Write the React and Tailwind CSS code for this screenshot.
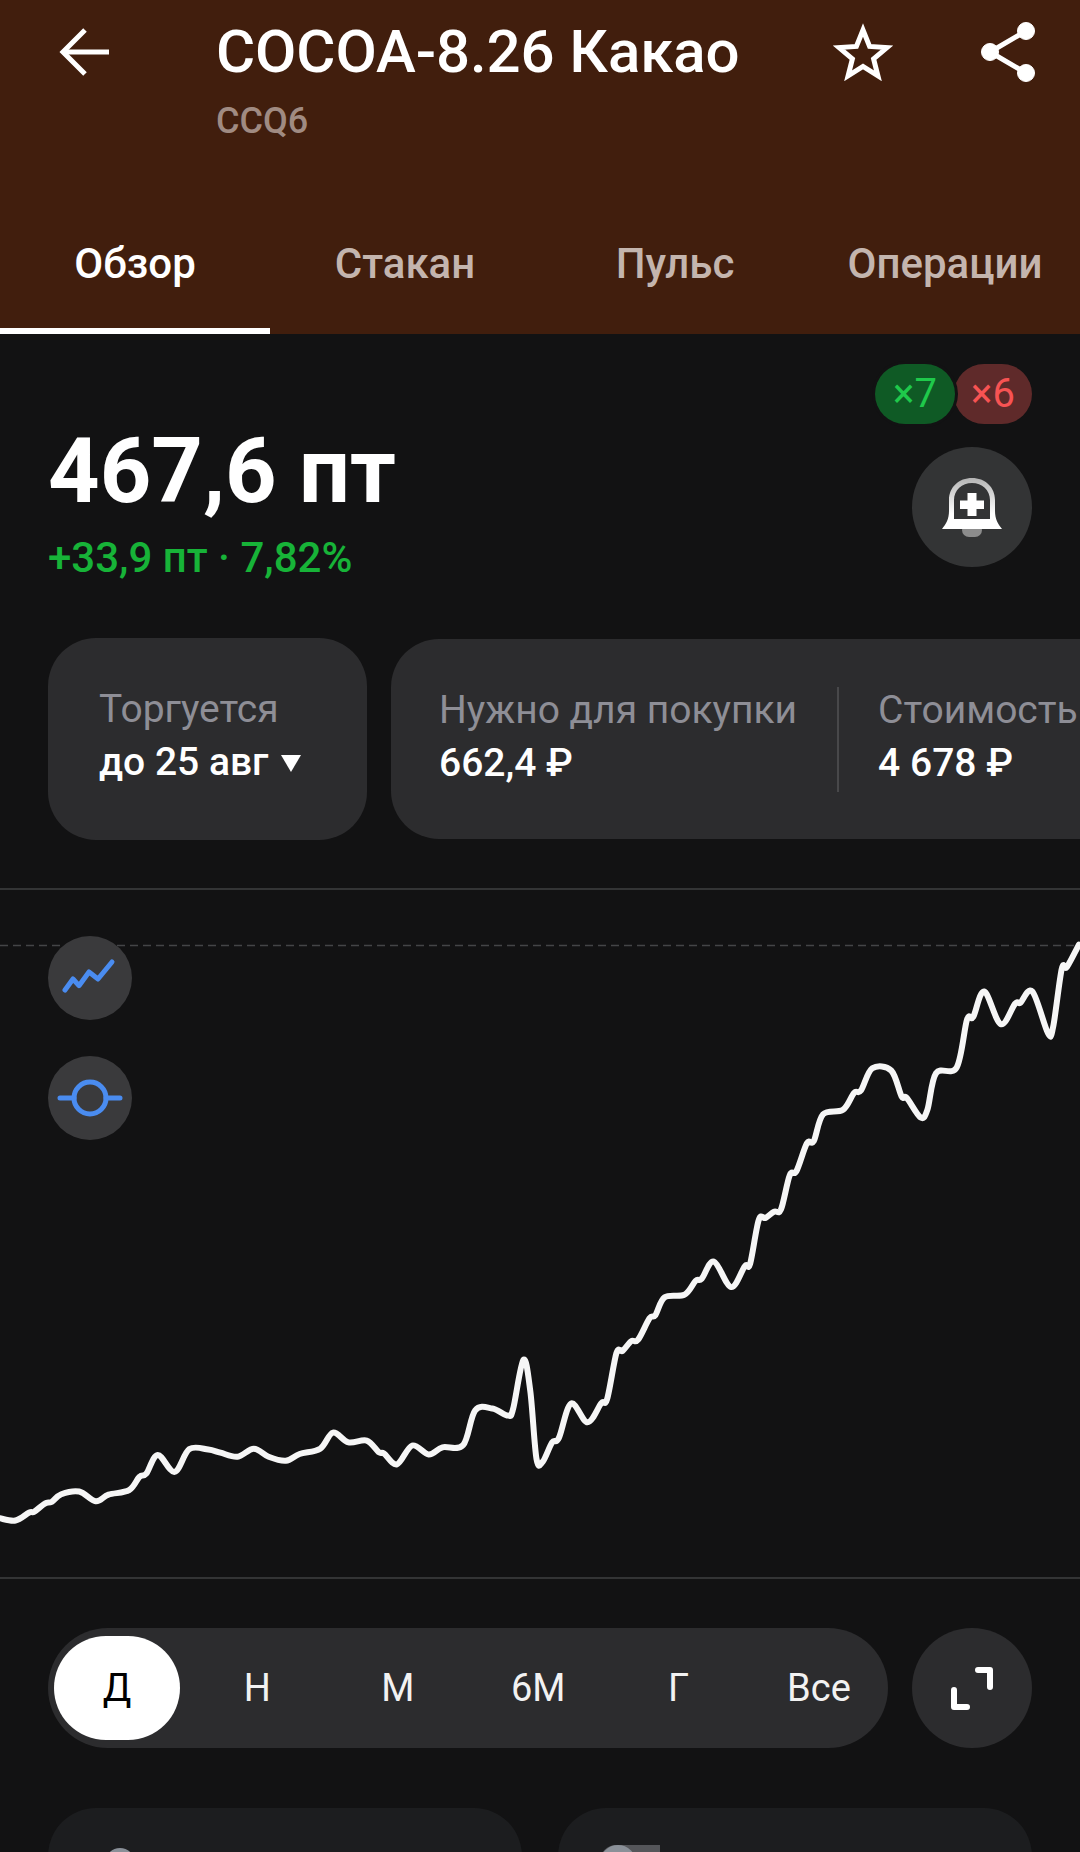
const FONT = { fontFamily: "Roboto, sans-serif" };

// points read off the reference chart, in page px
const LEFT = [[0,1385],[45,1390],[85,1372],[100,1370],[130,1352],[150,1348],[178,1331],[230,1325],[278,1347],[315,1332],[375,1322],[405,1292],[425,1285],[458,1243],[507,1281],[550,1230],[605,1231],[640,1238],[690,1247],[737,1229],[780,1247],[830,1256],[870,1241],[930,1229],[967,1193],[1012,1215],[1065,1211],[1100,1237],[1115,1240],[1153,1264],[1197,1222],[1245,1242],[1285,1226],[1345,1221],[1380,1143],[1430,1139],[1475,1155],[1490,1140],[1520,1030],[1540,1100],[1558,1252]];
const RIGHT = [[8,1258],[35,1215],[55,1205],[90,1128],[138,1170],[178,1127],[195,1118],[222,1015],[240,1010],[265,988],[285,985],[318,937],[335,930],[362,890],[420,884],[452,853],[470,848],[505,810],[555,867],[595,820],[610,815],[635,717],[655,712],[680,698],[700,693],[725,617],[745,607],[775,545],[795,540],[822,480],[880,470],[912,432],[932,427],[965,377],[1020,382],[1050,440],[1065,443],[1105,487],[1125,470],[1150,388],[1210,375],[1240,268],[1258,262],[1290,205],[1338,278],[1380,232],[1395,230],[1430,205],[1475,298],[1490,285],[1515,155],[1530,150],[1565,100]];

const CHART_TOP = 890;

const points = [
  ...LEFT.map(([x, y]) => [x / 2.904, 900 + y / 2.24 - CHART_TOP]),
  ...RIGHT.map(([x, y]) => [540 + x / 2.904, 900 + y / 2.24 - CHART_TOP]),
];

function smoothPath(pts) {
  let d = `M${pts[0][0].toFixed(1)} ${pts[0][1].toFixed(1)}`;
  for (let i = 0; i < pts.length - 1; i++) {
    const p0 = pts[Math.max(i - 1, 0)];
    const p1 = pts[i];
    const p2 = pts[i + 1];
    const p3 = pts[Math.min(i + 2, pts.length - 1)];
    const c1x = p1[0] + (p2[0] - p0[0]) / 6;
    const c1y = p1[1] + (p2[1] - p0[1]) / 6;
    const c2x = p2[0] - (p3[0] - p1[0]) / 6;
    const c2y = p2[1] - (p3[1] - p1[1]) / 6;
    d += `C${c1x.toFixed(1)} ${c1y.toFixed(1)} ${c2x.toFixed(1)} ${c2y.toFixed(1)} ${p2[0].toFixed(1)} ${p2[1].toFixed(1)}`;
  }
  return d;
}

const Back = () => (
  <svg width="52" height="50" viewBox="0 0 52 50" fill="none" stroke="white" strokeWidth="5">
    <path d="M50 25H5" />
    <path d="M26 3L4 25l22 22" />
  </svg>
);

const Star = () => (
  <svg width="60" height="58" viewBox="0 0 60 58" fill="none" stroke="white" strokeWidth="5" strokeLinejoin="miter">
    <path d="M30 7l6.6 16.4 17.4 1.2-13.4 11.2 4.3 17-14.9-9.4-14.9 9.4 4.3-17L6 24.600l17.400-1.200z" />
  </svg>
);

const Share = () => (
  <svg width="56" height="62" viewBox="0 0 56 62" fill="white" stroke="white">
    <path d="M46 10L10 31l36 21" fill="none" strokeWidth="5" />
    <circle cx="46" cy="10" r="8.500" />
    <circle cx="10" cy="31" r="8.500" />
    <circle cx="46" cy="52" r="8.500" />
  </svg>
);

const Bell = () => (
  <svg width="60" height="60" viewBox="0 0 60 60">
    <defs>
      <linearGradient id="bellFade" x1="0" y1="0" x2="0" y2="1">
        <stop offset="0" stopColor="#b4b4b4" />
        <stop offset="0.7" stopColor="#ffffff" />
      </linearGradient>
    </defs>
    <rect x="20" y="46" width="20" height="14" rx="7" fill="#8c8c8c" />
    <path
      fillRule="evenodd"
      fill="url(#bellFade)"
      d="M0 52C4 47 7 42 7 34V23C7 10 17 1 30 1s23 9 23 22v11c0 8 3 13 7 18zM12 42h36V23C48 13 40 6 30 6S12 13 12 23z"
    />
    <path fill="white" d="M25.500 16h9v7.500H42v8.500h-7.500v7h-9v-7H18v-8.500h7.500z" />
  </svg>
);

const Expand = () => (
  <svg width="48" height="48" viewBox="0 0 48 48" fill="none" stroke="white" strokeWidth="6" strokeLinecap="round" strokeLinejoin="round">
    <path d="M30 6h12v17" />
    <path d="M6 26v17h13" />
  </svg>
);

const PERIODS = ["Д", "Н", "М", "6М", "Г", "Все"];
const TABS = ["Обзор", "Стакан", "Пульс", "Операции"];

export default function App() {
  return (
    <div className="w-[1080px] h-[1852px] overflow-hidden bg-[#121213] text-white" style={FONT}>
      {/* HEADER */}
      <div className="h-[334px] bg-[#411e0d] flex flex-col">
        <div className="h-[189px] flex items-start">
          <div className="ml-[59px] mt-[27px] shrink-0"><Back /></div>
          <div className="ml-[105px] w-[600px]">
            <div className="text-[60px] leading-[64px] font-medium mt-[20px] whitespace-nowrap tracking-[-0.1px]">COCOA-8.26 Какао</div>
            <div className="text-[36px] leading-[42px] font-medium text-[#a08b82] mt-[16px]">CCQ6</div>
          </div>
          <div className="mt-[23px] shrink-0 ml-[17px]"><Star /></div>
          <div className="mt-[21px] ml-[87px] shrink-0"><Share /></div>
        </div>
        <div className="grid grid-cols-4 flex-1">
          {TABS.map((t, i) => (
            <div
              key={t}
              className={`flex items-start justify-center pt-[50px] text-[42px] leading-[50px] font-medium border-b-[6px] ${
                i === 0 ? "text-white border-white" : "text-[#c4b5ae] border-transparent"
              }`}
            >
              {t}
            </div>
          ))}
        </div>
      </div>

      {/* PRICE */}
      <div className="h-[304px] flex justify-between pl-[48px] pr-[48px]">
        <div className="pt-[90px]">
          <div className="text-[90px] leading-[96px] font-bold">467,6 пт</div>
          <div className="text-[42px] leading-[46px] font-medium text-[#17b338] mt-[15px]">+33,9 пт · 7,82%</div>
        </div>
        <div className="flex flex-col items-end pt-[30px]">
          <div className="flex text-[40px] leading-[60px]">
            <div className="relative z-10 h-[60px] w-[80px] rounded-full bg-[#0f5a25] text-[#1fc94b] text-center ring-[3px] ring-[#121213]">×7</div>
            <div className="h-[60px] w-[78px] -ml-[1px] rounded-full bg-[#5f2a2a] text-[#f75353] text-center">×6</div>
          </div>
          <div className="mt-[23px] w-[120px] h-[120px] rounded-full bg-[#333435] flex items-center justify-center">
            <Bell />
          </div>
        </div>
      </div>

      {/* INFO CARDS */}
      <div className="h-[252px] flex gap-[24px] pl-[48px] border-b-2 border-[#333435]">
        <div className="w-[319px] h-[202px] shrink-0 rounded-[48px] bg-[#2c2c2e] pl-[51px] pt-[48px]">
          <div className="text-[39px] leading-[46px] text-[#8e8e96]">Торгуется</div>
          <div className="flex items-center text-[39px] leading-[44px] font-medium mt-[8px]">
            до 25 авг
            <svg className="ml-[12px] mt-[3px]" width="22" height="19" viewBox="0 0 22 19" fill="white"><path d="M1 1h20L11 18z" /></svg>
          </div>
        </div>
        <div className="w-[800px] h-[200px] mt-[1px] shrink-0 rounded-[48px] bg-[#2c2c2e] pl-[48px] pb-[6px] flex items-center">
          <div className="pr-[40px]">
            <div className="text-[39px] leading-[46px] text-[#8e8e96]">Нужно для покупки</div>
            <div className="text-[39px] leading-[44px] font-medium mt-[8px]">662,4 ₽</div>
          </div>
          <div className="w-[2px] h-[105px] mt-[6px] bg-[#48484a]" />
          <div className="pl-[39px]">
            <div className="text-[39px] leading-[46px] text-[#8e8e96]">Стоимость</div>
            <div className="text-[39px] leading-[44px] font-medium mt-[8px]">4 678 ₽</div>
          </div>
        </div>
      </div>

      {/* CHART */}
      <div className="relative h-[689px] border-b-2 border-[#333435] pl-[48px] pt-[46px]">
        <svg className="absolute left-0 top-0" width="1080" height="689" fill="none">
          <line x1="0" y1="55.500" x2="1080" y2="55.500" stroke="#444547" strokeWidth="1.500" strokeDasharray="8 5" />
          <path d={smoothPath(points)} stroke="#f6f6f6" strokeWidth="6" strokeLinecap="round" strokeLinejoin="round" />
        </svg>
        <div className="relative flex flex-col gap-[36px]">
          <div className="w-[84px] h-[84px] rounded-full bg-[#3a3a3c]">
            <svg width="84" height="84" fill="none" stroke="#4a8cf0" strokeWidth="5" strokeLinecap="round" strokeLinejoin="round">
              <path d="M17 54l8-11 6 6.700L41 36l9 7 14-17" />
            </svg>
          </div>
          <div className="w-[84px] h-[84px] rounded-full bg-[#3a3a3c]">
            <svg width="84" height="84" fill="none" stroke="#4a8cf0" strokeWidth="5">
              <circle cx="42" cy="42" r="16" />
              <path d="M12 42h14M58 42h14" strokeLinecap="round" />
            </svg>
          </div>
        </div>
      </div>

      {/* PERIOD */}
      <div className="flex justify-between pl-[48px] pr-[48px] mt-[49px]">
        <div className="w-[840px] h-[120px] rounded-full bg-[#2c2c2e] flex justify-between items-center px-[6px]">
          {PERIODS.map((p, i) => (
            <div
              key={p}
              className={`w-[126px] h-[104px] rounded-full flex items-center justify-center text-[38px] ${
                i === 0 ? "bg-white text-black" : "text-[#f2f2f2]"
              }`}
            >
              {p}
            </div>
          ))}
        </div>
        <div className="w-[120px] h-[120px] rounded-full bg-[#2c2c2e] flex items-center justify-center">
          <Expand />
        </div>
      </div>

      {/* BOTTOM CARDS */}
      <div className="flex gap-[36px] pl-[48px] pr-[48px] mt-[60px]">
        <div className="w-[474px] h-[200px] rounded-[48px] bg-[#1c1d1f] pt-[40px] pl-[57px]">
          <div className="w-[30px] h-[30px] rounded-full bg-[#8a9098]" />
        </div>
        <div className="w-[475px] h-[200px] rounded-[48px] bg-[#1c1d1f] pt-[37px] pl-[42px]">
          <div className="w-[60px] h-[32px] rounded-tl-[16px] bg-[#55565a]">
            <div className="w-[36px] h-[36px] rounded-full bg-[#8a9098]" />
          </div>
        </div>
      </div>
    </div>
  );
}
